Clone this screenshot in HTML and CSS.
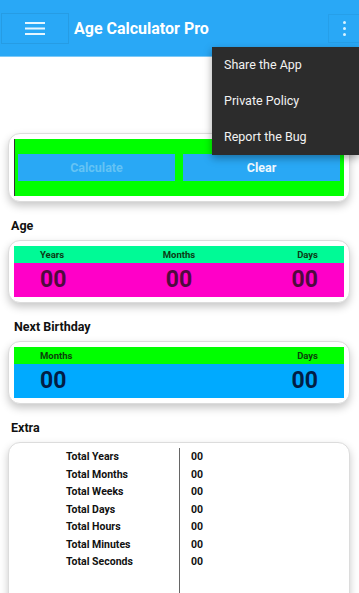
FILE: index.html
```html
<!DOCTYPE html>
<html lang="en">
<head>
  <meta charset="UTF-8" />
  <meta name="viewport" content="width=device-width, initial-scale=1.0"/>
  <title>Age Calculator Pro</title>
  <link rel="stylesheet" href="styles.css">
</head>
<body>
  <header class="appbar">
    <div class="nav-btn">
      <svg width="20" height="13" viewBox="0 0 20 13">
        <rect x="0" y="0" width="20" height="2" fill="#e6f6ff"/>
        <rect x="0" y="5.5" width="20" height="2" fill="#e6f6ff"/>
        <rect x="0" y="11" width="20" height="2" fill="#e6f6ff"/>
      </svg>
    </div>
    <div class="title">Age Calculator Pro</div>
    <div class="more-btn">
      <span class="dot"></span>
      <span class="dot"></span>
      <span class="dot"></span>
    </div>
  </header>

  <div class="dropdown">
    <div class="dropdown-item">Share the App</div>
    <div class="dropdown-item">Private Policy</div>
    <div class="dropdown-item">Report the Bug</div>
  </div>

  <main class="content">
    <div class="card">
      <div class="actions">
        <div class="btn btn-disabled">Calculate</div>
        <div class="btn">Clear</div>
      </div>
    </div>

    <div class="section-title">Age</div>
    <div class="card">
      <div class="result-head mint cols-3">
        <span>Years</span>
        <span>Months</span>
        <span>Days</span>
      </div>
      <div class="result-body magenta cols-3">
        <span>00</span>
        <span>00</span>
        <span>00</span>
      </div>
    </div>

    <div class="section-title indent">Next Birthday</div>
    <div class="card">
      <div class="result-head green cols-2">
        <span>Months</span>
        <span>Days</span>
      </div>
      <div class="result-body sky cols-2">
        <span>00</span>
        <span>00</span>
      </div>
    </div>

    <div class="section-title">Extra</div>
    <div class="card extra">
      <div class="extra-labels">
        <div>Total Years</div>
        <div>Total Months</div>
        <div>Total Weeks</div>
        <div>Total Days</div>
        <div>Total Hours</div>
        <div>Total Minutes</div>
        <div>Total Seconds</div>
      </div>
      <div class="extra-values">
        <div>00</div>
        <div>00</div>
        <div>00</div>
        <div>00</div>
        <div>00</div>
        <div>00</div>
        <div>00</div>
      </div>
    </div>
  </main>
</body>
</html>
```

FILE: styles.css
```css
body {
  margin: 0;
  width: 359px;
  background-color: #ffffff;
  font-family: Roboto, "Liberation Sans", sans-serif;
  position: relative;
  overflow: hidden;
  height: 593px;
}

.appbar {
  height: 56px;
  background-color: #29a8f6;
  display: flex;
  align-items: center;
  border-bottom: 1px solid #7cc9f7;
}

.nav-btn {
  width: 66px;
  height: 29px;
  margin-left: 1px;
  border: 1px solid rgba(0,0,0,0.07);
  display: flex;
  align-items: center;
  justify-content: center;
}

.title {
  margin-left: 5px;
  color: #ffffff;
  font-size: 16px;
  font-weight: bold;
  flex: 1;
}

.more-btn {
  width: 29px;
  height: 27px;
  border: 1px solid rgba(0,0,0,0.05);
  border-right: none;
  display: flex;
  flex-direction: column;
  align-items: center;
  justify-content: center;
  gap: 3px;
  padding-left: 1px;
}

.dot {
  width: 3px;
  height: 3px;
  border-radius: 50%;
  background-color: #d8f3ff;
}

.dropdown {
  position: absolute;
  top: 47px;
  right: 0;
  width: 147px;
  background-color: #2c2c2c;
  box-shadow: 0 3px 8px rgba(0,0,0,0.35);
  z-index: 5;
}

.dropdown-item {
  height: 36px;
  line-height: 36px;
  padding-left: 12px;
  color: #f2f2f2;
  font-size: 12.5px;
}

.content {
  padding-top: 76px;
}

.card {
  margin: 0 9px 0 8px;
  padding: 5px;
  background-color: #ffffff;
  border: 1px solid #dcdcdc;
  border-radius: 12px;
  box-shadow: 0 4px 9px rgba(0,0,0,0.22);
}

.actions {
  background-color: #00ff00;
  border-left: 1px solid #333;
  display: flex;
  gap: 8px;
  padding: 15px 4px 15px 3px;
}

.btn {
  flex: 1;
  height: 27px;
  line-height: 27px;
  text-align: center;
  background-color: #29a8f5;
  color: #eef8ff;
  font-size: 12.5px;
  font-weight: bold;
}

.btn-disabled {
  color: #64c3f4;
}

.section-title {
  margin: 16px 0 6px 11px;
  font-size: 12.5px;
  font-weight: bold;
  color: #111;
  line-height: 16px;
}

.section-title.indent {
  margin-left: 14px;
}

.result-head,
.result-body {
  display: grid;
  padding: 0 26px;
}

.cols-3 {
  grid-template-columns: 1fr 1fr 1fr;
}

.cols-2 {
  grid-template-columns: 1fr 1fr;
}

.cols-3 span:nth-child(2) {
  justify-self: center;
}

.result-head span:last-child,
.result-body span:last-child {
  justify-self: end;
}

.result-head {
  height: 17px;
  line-height: 18px;
  font-size: 9.5px;
  font-weight: bold;
}

.result-body {
  height: 34px;
  line-height: 34px;
  font-size: 23px;
  font-weight: bold;
}

.mint {
  background-color: #00fa96;
  color: #0c3b14;
}

.green {
  background-color: #00ff00;
  color: #0b3f0b;
}

.magenta {
  background-color: #ff00c8;
  color: #4e0a3e;
}

.sky {
  background-color: #00aaff;
  color: #021d45;
}

.extra {
  display: grid;
  grid-template-columns: 165px 1fr;
  padding-bottom: 40px;
  border-bottom-left-radius: 0;
  border-bottom-right-radius: 0;
}

.extra-labels,
.extra-values {
  font-size: 10.5px;
  font-weight: bold;
  color: #111;
  line-height: 17.5px;
  padding-bottom: 30px;
}

.extra-labels {
  padding-left: 52px;
}

.extra-values {
  border-left: 1px solid #666;
  padding-left: 11px;
}
```
